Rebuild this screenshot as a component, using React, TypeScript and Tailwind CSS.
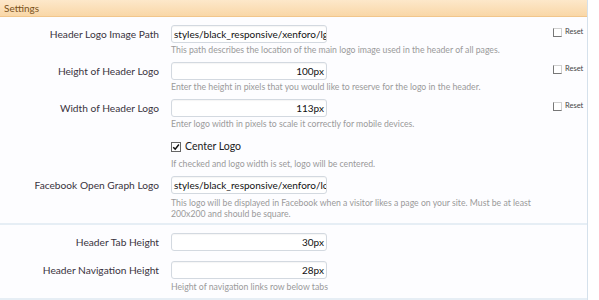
const font = { fontFamily: 'Lato, "Liberation Sans", Arial, sans-serif' };

function ResetBox() {
  return (
    <label className="flex self-start items-center gap-[3px] pt-[2px] pl-[2px] text-[7.5px] leading-[10px] text-[#444]">
      <span className="block h-[9px] w-[9px] border border-[#777] border-t-[#d0d0d0] border-r-[#d0d0d0] bg-white" />
      Reset
    </label>
  );
}

function TextRow({
  label,
  value,
  align = 'left',
  explain,
  reset = false,
  gap = 'mt-[1px]',
}: {
  label: string;
  value: string;
  align?: 'left' | 'right';
  explain?: string;
  reset?: boolean;
  gap?: string;
}) {
  return (
    <div className="flex">
      <div className="w-[171px] shrink-0 pr-[12px] text-right text-[10.2px] leading-[18px] text-[#3a3340]">
        {label}
      </div>
      <div className="w-[380px] shrink-0">
        <div
          className={`h-[18px] w-[156px] overflow-hidden whitespace-nowrap rounded-[3px] border border-[#d3d9e0] bg-white px-[2px] text-[10px] leading-[16px] text-[#111] shadow-[inset_0_1px_1px_rgba(0,0,0,0.04)] ${
            align === 'right' ? 'text-right' : 'text-left'
          }`}
        >
          {value}
        </div>
        {explain && (
          <p className={`${gap} text-[8.7px] leading-[11px] text-[#9a9a9a]`}>{explain}</p>
        )}
      </div>
      {reset && <ResetBox />}
    </div>
  );
}

export default function App() {
  return (
    <div className="min-h-[300px] bg-white" style={font}>
      <div className="w-[588px] border-r border-[#d5e1ec] bg-[#fdfdff]">
        <div className="flex h-[17px] items-center border-b border-[#f1c68c] bg-gradient-to-b from-[#fde8ca] to-[#f9d7a7] pl-[4px] text-[10px] text-[#7a5220]">
          Settings
        </div>

        <div className="flex flex-col gap-[7px] border-b-2 border-[#e6eef5] pt-[8px] pb-[4px]">
          <TextRow
            label="Header Logo Image Path"
            value="styles/black_responsive/xenforo/lgbt"
            explain="This path describes the location of the main logo image used in the header of all pages."
            reset
          />
          <TextRow
            label="Height of Header Logo"
            value="100px"
            align="right"
            explain="Enter the height in pixels that you would like to reserve for the logo in the header."
            reset
          />
          <TextRow
            label="Width of Header Logo"
            value="113px"
            align="right"
            explain="Enter logo width in pixels to scale it correctly for mobile devices."
            reset
          />

          <div className="flex pt-[4px]">
            <div className="w-[171px] shrink-0" />
            <div className="w-[380px] shrink-0">
              <label className="flex h-[14px] items-center gap-[4px] text-[10.5px] text-[#222]">
                <span className="flex h-[10px] w-[10px] items-center justify-center border border-[#666] bg-white">
                  <svg viewBox="0 0 10 10" className="h-[8px] w-[8px]">
                    <path d="M1.5 5.2 L4 7.6 L8.6 1.8" fill="none" stroke="#111" strokeWidth="1.8" />
                  </svg>
                </span>
                Center Logo
              </label>
              <p className="mt-[4px] text-[8.7px] leading-[11px] text-[#9a9a9a]">
                If checked and logo width is set, logo will be centered.
              </p>
            </div>
          </div>

          <TextRow
            label="Facebook Open Graph Logo"
            value="styles/black_responsive/xenforo/logo"
            explain="This logo will be displayed in Facebook when a visitor likes a page on your site. Must be at least 200x200 and should be square."
            gap="mt-[3px]"
          />
        </div>

        <div className="flex flex-col gap-[10px] border-b-2 border-[#e6eef5] pt-[8px] pb-[6px]">
          <TextRow label="Header Tab Height" value="30px" align="right" />
          <TextRow
            label="Header Navigation Height"
            value="28px"
            align="right"
            explain="Height of navigation links row below tabs"
            gap="mt-[2px]"
          />
        </div>
      </div>
    </div>
  );
}
